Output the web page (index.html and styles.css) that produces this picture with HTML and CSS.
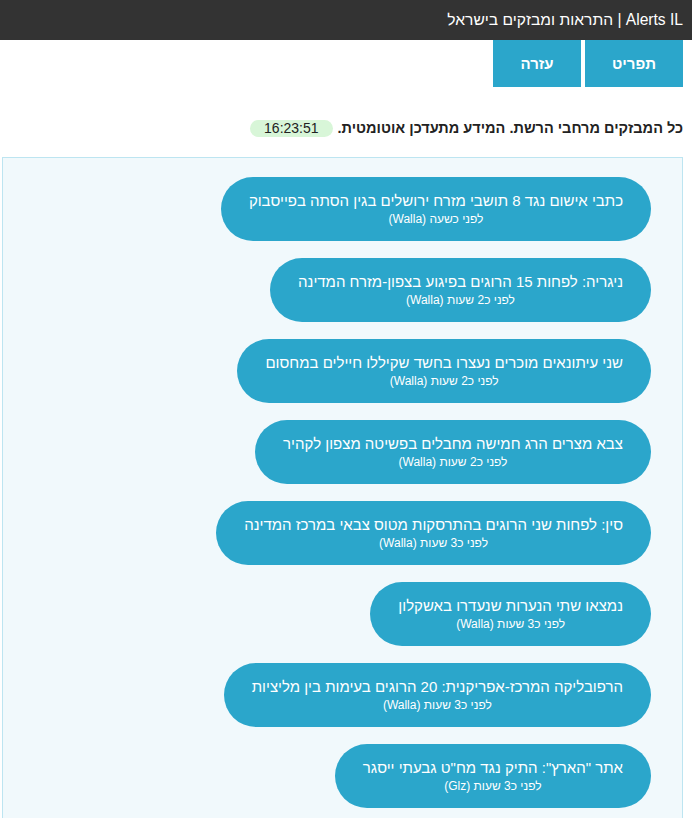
FILE: index.html
```html
<!DOCTYPE html>
<html lang="he" dir="rtl">
<head>
<meta charset="utf-8">
<title>Alerts IL</title>
<link rel="stylesheet" href="styles.css">
</head>
<body>
<header class="topbar">Alerts IL | התראות ומבזקים בישראל</header>
<nav class="nav">
  <a class="nav-btn nav-menu">תפריט</a>
  <a class="nav-btn nav-help">עזרה</a>
</nav>
<p class="status">כל המבזקים מרחבי הרשת. המידע מתעדכן אוטומטית. <span class="clock">16:23:51</span></p>
<section class="panel">
  <div class="item"><div class="title">כתבי אישום נגד 8 תושבי מזרח ירושלים בגין הסתה בפייסבוק</div><div class="meta">לפני כשעה (Walla)</div></div>
  <div class="item"><div class="title">ניגריה: לפחות 15 הרוגים בפיגוע בצפון-מזרח המדינה</div><div class="meta">לפני כ2 שעות (Walla)</div></div>
  <div class="item"><div class="title">שני עיתונאים מוכרים נעצרו בחשד שקיללו חיילים במחסום</div><div class="meta">לפני כ2 שעות (Walla)</div></div>
  <div class="item"><div class="title">צבא מצרים הרג חמישה מחבלים בפשיטה מצפון לקהיר</div><div class="meta">לפני כ2 שעות (Walla)</div></div>
  <div class="item"><div class="title">סין: לפחות שני הרוגים בהתרסקות מטוס צבאי במרכז המדינה</div><div class="meta">לפני כ3 שעות (Walla)</div></div>
  <div class="item"><div class="title">נמצאו שתי הנערות שנעדרו באשקלון</div><div class="meta">לפני כ3 שעות (Walla)</div></div>
  <div class="item"><div class="title">הרפובליקה המרכז-אפריקנית: 20 הרוגים בעימות בין מליציות</div><div class="meta">לפני כ3 שעות (Walla)</div></div>
  <div class="item"><div class="title">אתר "הארץ": התיק נגד מח"ט גבעתי ייסגר</div><div class="meta">לפני כ3 שעות (Glz)</div></div>
</section>
</body>
</html>
```
FILE: styles.css
```css
html, body {
  margin: 0;
  padding: 0;
  background: #fff;
}
body {
  direction: rtl;
  font-family: "Liberation Sans", Arial, sans-serif;
  color: #222;
  overflow: hidden;
}
.topbar {
  height: 40px;
  background: #333;
  color: #fff;
  font-size: 15.6px;
  display: flex;
  align-items: center;
  padding: 0 9px;
}
.nav {
  display: flex;
  gap: 4px;
  padding: 0 9px;
}
.nav-btn {
  display: flex;
  align-items: center;
  justify-content: center;
  height: 47px;
  background: #2ba6cb;
  color: #fff;
  font-weight: bold;
  font-size: 15px;
}
.nav-menu { width: 98px; }
.nav-help { width: 88px; }
.status {
  margin: 30px 9px 18px 0;
  height: 22px;
  line-height: 22px;
  font-size: 14.5px;
  font-weight: bold;
  color: #222;
}
.clock {
  display: inline-block;
  background: #d8f6d8;
  color: #222;
  font-weight: normal;
  font-size: 14px;
  padding: 0 14px;
  line-height: 17px;
  border-radius: 9px;
  margin-right: 1px;
}
.panel {
  margin: 0 9px 0 2px;
  border: 1px solid #bde5f1;
  background: #f1f9fc;
  padding: 19px 31px 20px;
  display: flex;
  flex-direction: column;
  align-items: flex-start;
  gap: 17px;
}
.item {
  background: #2ba6cb;
  color: #fff;
  border-radius: 32px;
  padding: 14px 28px;
  text-align: center;
}
.title {
  font-size: 15px;
  line-height: 20px;
}
.meta {
  font-size: 12px;
  line-height: 16px;
}
```
